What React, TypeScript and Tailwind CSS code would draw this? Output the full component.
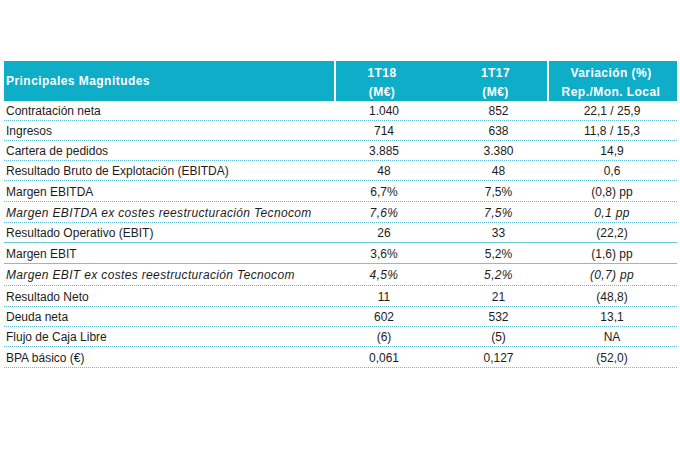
import React from "react";

type Row = {
  label: string;
  a: string;
  b: string;
  v: string;
  italic?: boolean;
  h: string;
  solid?: boolean;
};

const rows: Row[] = [
  { label: "Contratación neta", a: "1.040", b: "852", v: "22,1 / 25,9", h: "h-[20px]" },
  { label: "Ingresos", a: "714", b: "638", v: "11,8 / 15,3", h: "h-[20px]" },
  { label: "Cartera de pedidos", a: "3.885", b: "3.380", v: "14,9", h: "h-[20px]" },
  { label: "Resultado Bruto de Explotación (EBITDA)", a: "48", b: "48", v: "0,6", h: "h-[20px]" },
  { label: "Margen EBITDA", a: "6,7%", b: "7,5%", v: "(0,8) pp", h: "h-[21px]" },
  { label: "Margen EBITDA ex costes reestructuración Tecnocom", a: "7,6%", b: "7,5%", v: "0,1 pp", italic: true, h: "h-[21px]" },
  { label: "Resultado Operativo (EBIT)", a: "26", b: "33", v: "(22,2)", h: "h-[20px]", solid: true },
  { label: "Margen EBIT", a: "3,6%", b: "5,2%", v: "(1,6) pp", h: "h-[21px]", solid: true },
  { label: "Margen EBIT ex costes reestructuración Tecnocom", a: "4,5%", b: "5,2%", v: "(0,7) pp", italic: true, h: "h-[22px]" },
  { label: "Resultado Neto", a: "11", b: "21", v: "(48,8)", h: "h-[21px]" },
  { label: "Deuda neta", a: "602", b: "532", v: "13,1", h: "h-[20px]" },
  { label: "Flujo de Caja Libre", a: "(6)", b: "(5)", v: "NA", h: "h-[20px]" },
  { label: "BPA básico (€)", a: "0,061", b: "0,127", v: "(52,0)", h: "h-[21px]" },
];

export default function App() {
  return (
    <div
      className="w-[680px] h-[449px] bg-white pt-[61px] pl-[4px] text-[#1c1c1c]"
      style={{ fontFamily: '"Liberation Sans", Arial, sans-serif' }}
    >
      <div className="w-[673px]">
        {/* header */}
        <div className="flex h-[40px] bg-[#0eadc8] text-white font-bold text-[12px] tracking-[0.45px]">
          <div className="w-[332px] flex items-center pl-[2px] border-r-2 border-white">
            Principales Magnitudes
          </div>
          <div className="w-[92px] flex flex-col items-center justify-center gap-[5px] leading-[14px] pt-[2px]">
            <span>1T18</span>
            <span>(M€)</span>
          </div>
          <div className="w-[121px] flex flex-col items-center justify-center gap-[5px] leading-[14px] pt-[2px] pl-[16px] border-r-2 border-white">
            <span>1T17</span>
            <span>(M€)</span>
          </div>
          <div className="flex-1 flex flex-col items-center justify-center gap-[5px] leading-[14px] pt-[2px] pr-[4px]">
            <span>Variación (%)</span>
            <span>Rep./Mon. Local</span>
          </div>
        </div>

        {rows.map((r, i) => (
          <div
            key={i}
            className={
              "flex items-center pt-[1px] text-[12px] border-b " +
              r.h +
              " " +
              (r.solid ? "border-solid border-[#6cc9da]" : "border-dotted border-[#5cbfd5]") +
              (r.italic ? " italic tracking-[0.35px]" : "")
            }
          >
            <div className="w-[334px] pl-[2px] whitespace-nowrap">{r.label}</div>
            <div className="w-[92px] text-center">{r.a}</div>
            <div className="w-[121px] text-center pl-[16px]">{r.b}</div>
            <div className="flex-1 text-center pr-[4px]">{r.v}</div>
          </div>
        ))}
      </div>
    </div>
  );
}
